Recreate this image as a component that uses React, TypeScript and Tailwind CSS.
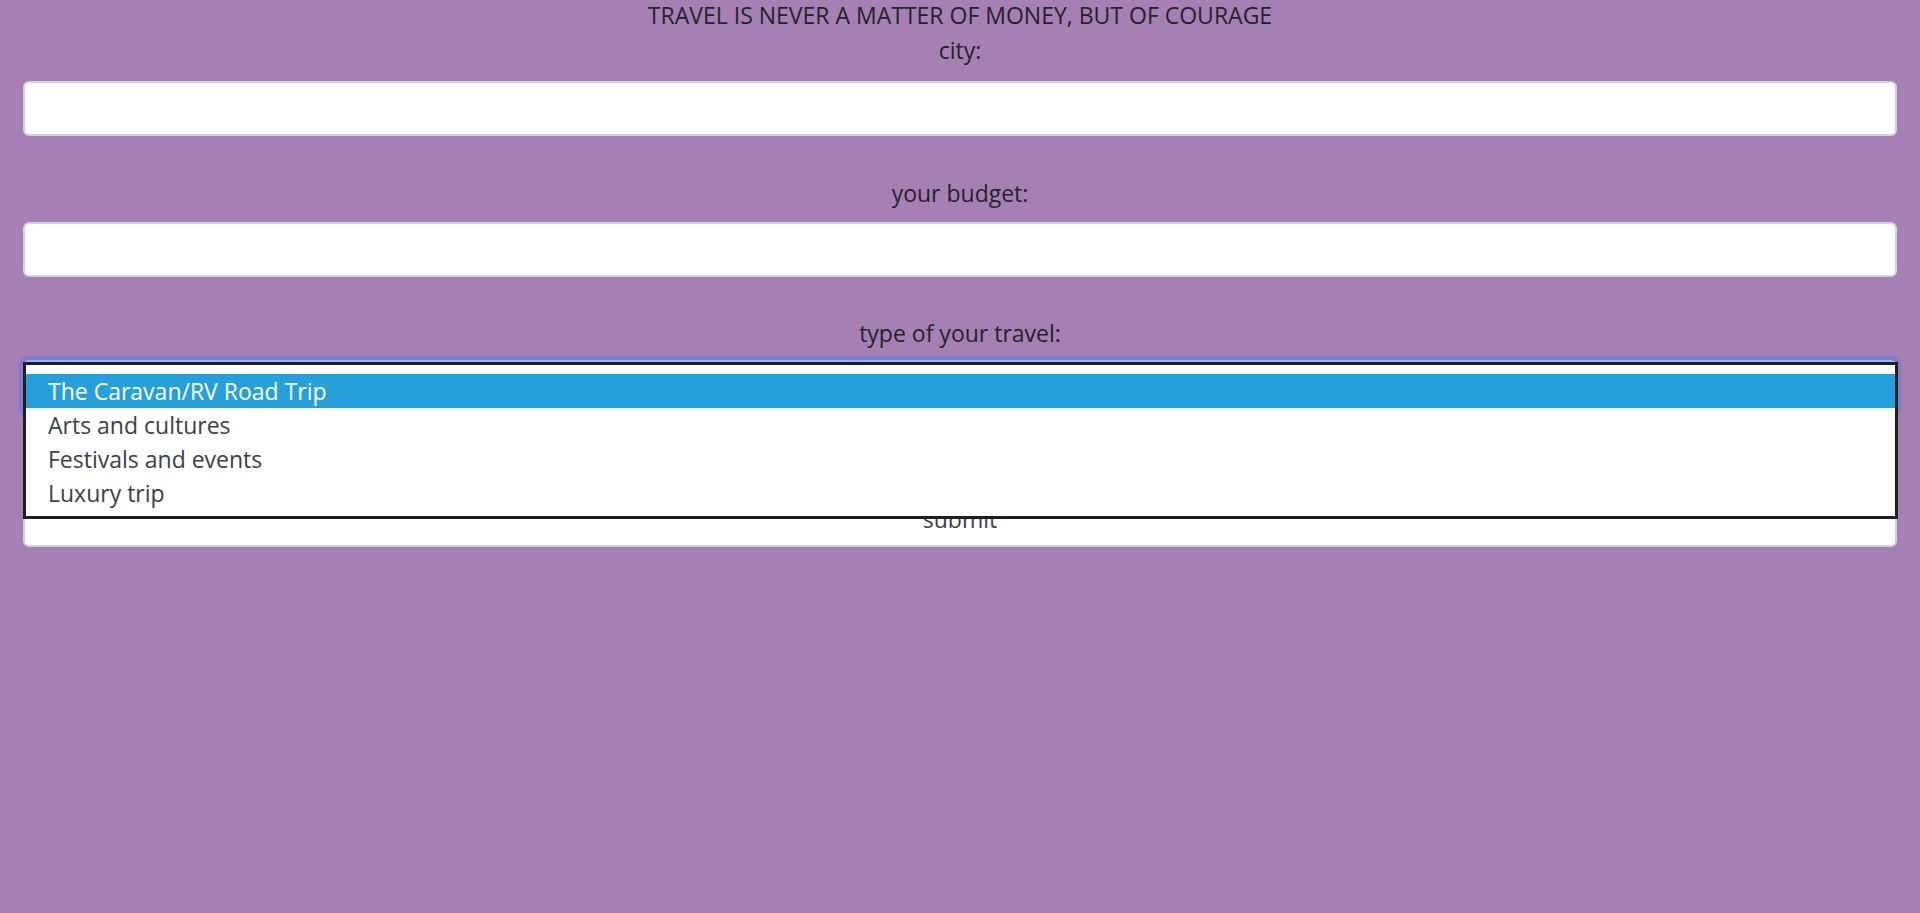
import React from "react";

const options = [
  "The Caravan/RV Road Trip",
  "Arts and cultures",
  "Festivals and events",
  "Luxury trip",
];

function Field({ label, className }: { label: string; className?: string }) {
  return (
    <div className={`flex flex-col ${className ?? ""}`}>
      <label className="text-center mb-[11px]">{label}</label>
      <input
        type="text"
        className="h-[55px] w-full rounded-md border-2 border-[#ced4da] bg-white outline-none"
      />
    </div>
  );
}

export default function App() {
  return (
    <div className="flow-root min-h-screen bg-[#a67fb4] font-['Open_Sans','Noto_Sans',sans-serif] text-[23px] leading-[35px] text-[#212529]">
      <p className="text-center -mt-[2px]">TRAVEL IS NEVER A MATTER OF MONEY, BUT OF COURAGE</p>
      <form className="px-[23px]" onSubmit={(e) => e.preventDefault()}>
        {/* city */}
        <div className="flex flex-col">
          <label className="text-center mb-[13px]">city:</label>
          <input
            type="text"
            className="h-[55px] w-full rounded-md border-2 border-[#ced4da] bg-white outline-none"
          />
        </div>

        <Field label="your budget:" className="mt-[40px]" />

        {/* type of travel, dropdown is open */}
        <div className="flex flex-col mt-[39px]">
          <label className="text-center mb-[9px]">type of your travel:</label>
          <div className="relative">
            <div className="h-[55px] w-full rounded-md border-2 border-[#86b7fe] bg-white shadow-[0_0_0_4px_rgba(13,110,253,0.25)]" />
            <ul className="absolute top-[2px] left-0 right-[-1px] z-10 border-[3px] border-[#1e1e1e] bg-white pt-[9px] pb-[6px] leading-[34px]">
              {options.map((o, i) => (
                <li
                  key={o}
                  className={
                    i === 0
                      ? "h-[34px] pl-[22px] bg-[#26a0da] text-white"
                      : "h-[34px] pl-[22px] text-[#3c4048]"
                  }
                >
                  {o}
                </li>
              ))}
            </ul>
          </div>
        </div>

        <button
          type="submit"
          className="mt-[77px] h-[55px] w-full rounded-md border-2 border-[#ced4da] bg-white text-center text-[#3c4048]"
        >
          submit
        </button>
      </form>
    </div>
  );
}
